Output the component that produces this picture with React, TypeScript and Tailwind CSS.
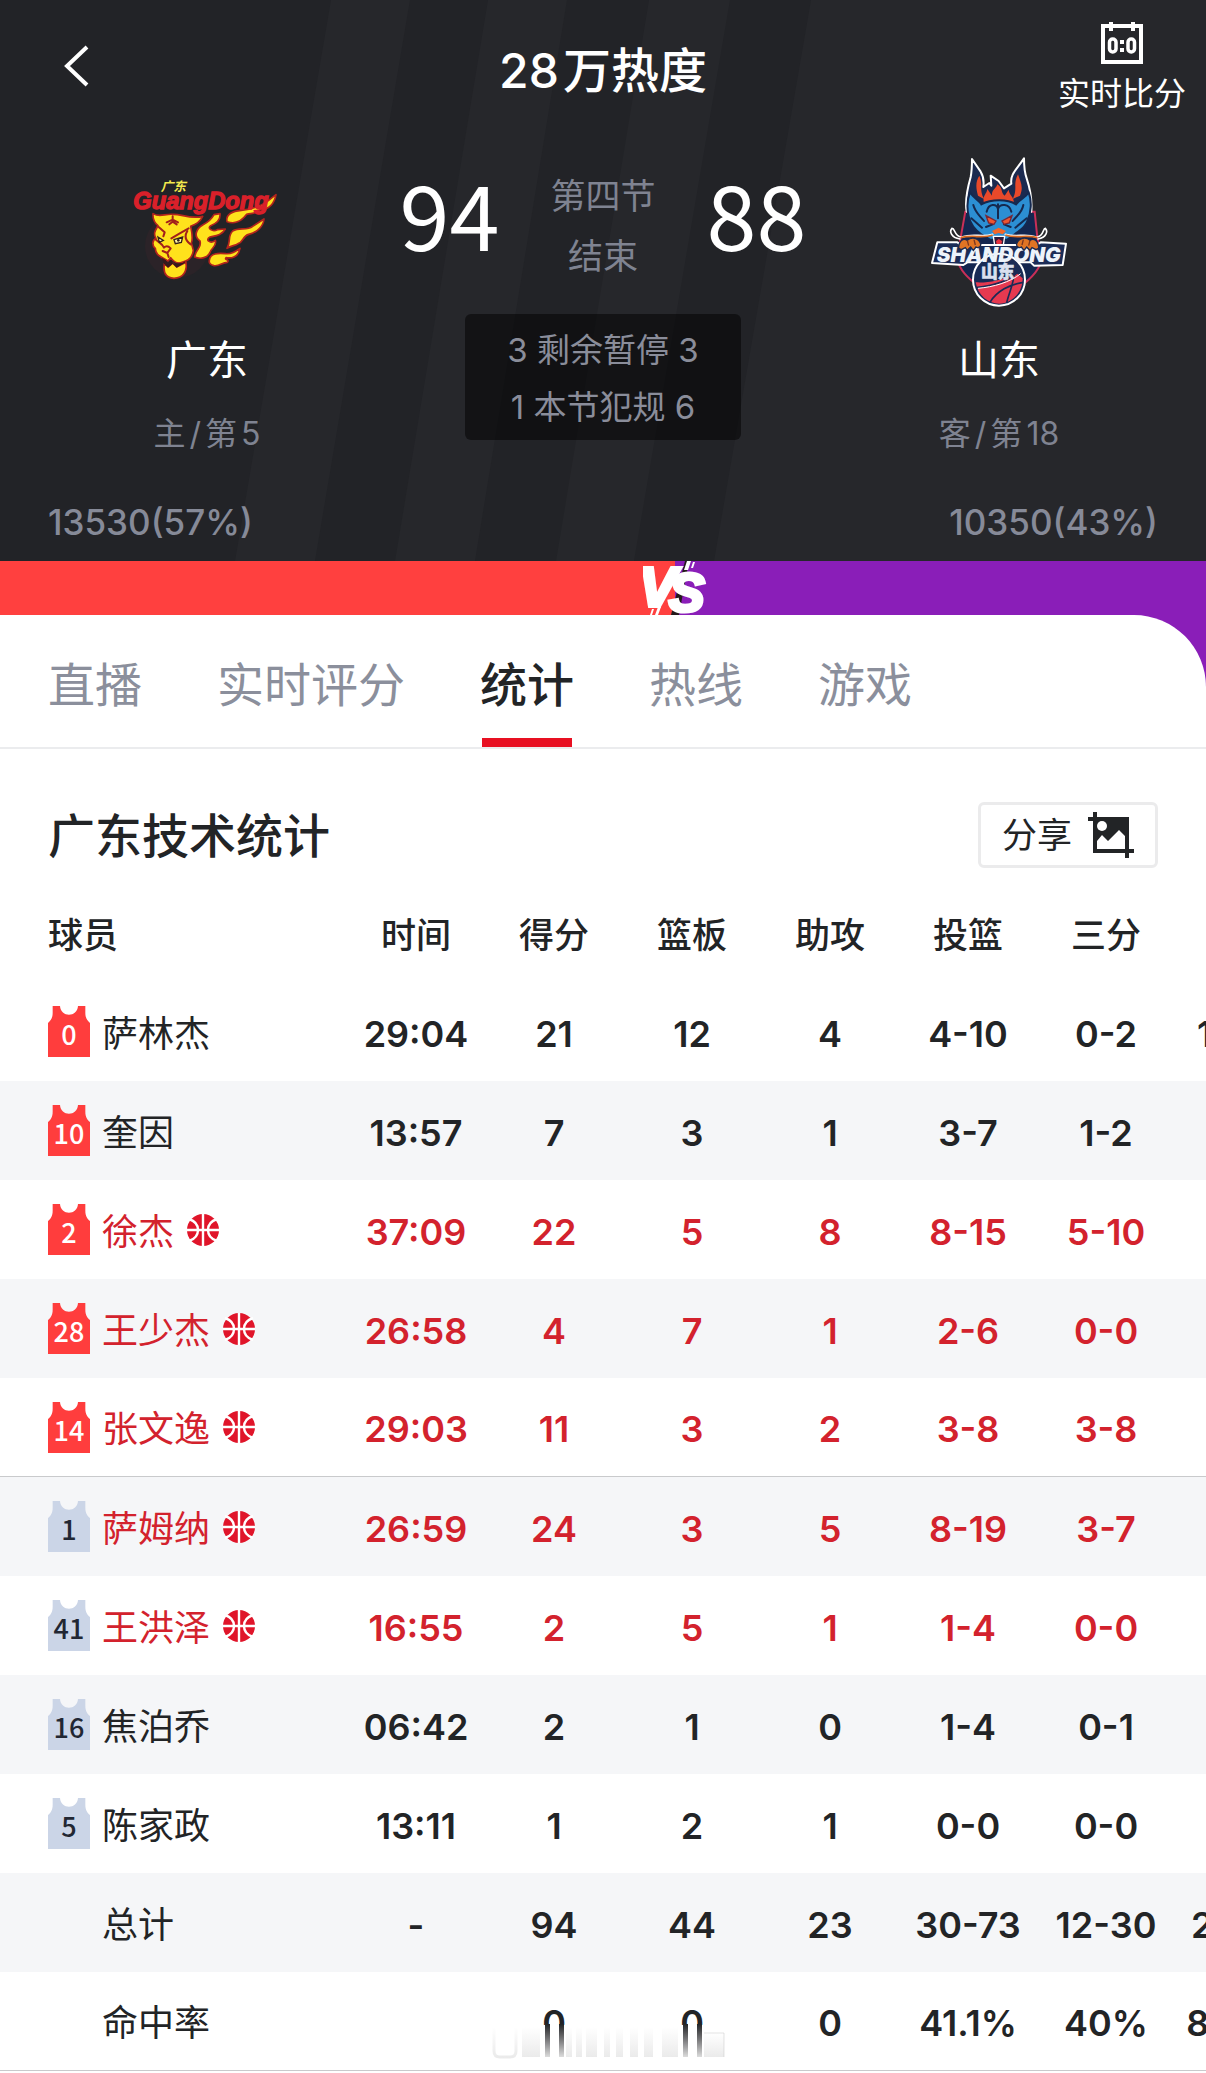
import React from "react";

type Player = {
  no: string;
  name: string;
  starter: boolean;
  onCourt: boolean;
  stats: string[];
};

const columns = ["时间", "得分", "篮板", "助攻", "投篮", "三分", "罚球"];

const players: Player[] = [
  { no: "0", name: "萨林杰", starter: true, onCourt: false, stats: ["29:04", "21", "12", "4", "4-10", "0-2", "13-14"] },
  { no: "10", name: "奎因", starter: true, onCourt: false, stats: ["13:57", "7", "3", "1", "3-7", "1-2", ""] },
  { no: "2", name: "徐杰", starter: true, onCourt: true, stats: ["37:09", "22", "5", "8", "8-15", "5-10", ""] },
  { no: "28", name: "王少杰", starter: true, onCourt: true, stats: ["26:58", "4", "7", "1", "2-6", "0-0", ""] },
  { no: "14", name: "张文逸", starter: true, onCourt: true, stats: ["29:03", "11", "3", "2", "3-8", "3-8", ""] },
  { no: "1", name: "萨姆纳", starter: false, onCourt: true, stats: ["26:59", "24", "3", "5", "8-19", "3-7", ""] },
  { no: "41", name: "王洪泽", starter: false, onCourt: true, stats: ["16:55", "2", "5", "1", "1-4", "0-0", ""] },
  { no: "16", name: "焦泊乔", starter: false, onCourt: false, stats: ["06:42", "2", "1", "0", "1-4", "0-1", ""] },
  { no: "5", name: "陈家政", starter: false, onCourt: false, stats: ["13:11", "1", "2", "1", "0-0", "0-0", ""] },
];

const summary = [
  { name: "总计", stats: ["-", "94", "44", "23", "30-73", "12-30", "22-26"] },
  { name: "命中率", stats: ["", "0", "0", "0", "41.1%", "40%", "84.6%"] },
];

function Stripes() {
  return (
    <svg className="absolute inset-0 h-full w-full" viewBox="0 0 1206 561" preserveAspectRatio="xMidYMin slice" aria-hidden="true">
      <g fill="#26272b">
        <path d="M331 0H410L315 561H235Z" />
        <path d="M488 0H567L475 561H395Z" />
        <path d="M649 0H730L634 561H556Z" />
        <path d="M811 0H1206V561H714Z" />
      </g>
    </svg>
  );
}

function ScoreIcon() {
  return (
    <svg width="42" height="42" viewBox="0 0 42 42" aria-hidden="true">
      <path d="M2 4H40V40H2Z" fill="none" stroke="#fff" strokeWidth="4" />
      <path d="M8 0H12V9H8ZM30 0H34V9H30Z" fill="#fff" />
      <g fill="none" stroke="#fff" strokeWidth="3.5">
        <rect x="8.5" y="17" width="6.5" height="13" rx="3.2" />
        <rect x="27" y="17" width="6.5" height="13" rx="3.2" />
      </g>
      <path d="M19 18H23V22H19ZM19 26H23V30H19Z" fill="#fff" />
    </svg>
  );
}

function GuangdongLogo() {
  return (
    <svg width="150" height="152" viewBox="70 -15 450 456" role="img" aria-label="GuangDong">
      <circle cx="205" cy="255" r="96" fill="#2b2328" />
      <g fill="#ffe21c" stroke="#b3241c" strokeWidth="5" strokeLinejoin="round">
        <path d="M355 182C350 160 372 150 398 148C425 145 455 135 472 124L502 101C498 125 482 147 455 146C440 160 428 156 414 160C398 182 376 190 355 182Z" />
        <path d="M355 262C368 240 356 225 372 210C392 198 414 210 432 196L466 174C464 196 446 214 420 220C402 224 404 244 388 248C378 254 368 254 355 262Z" />
        <path d="M302 298C304 276 330 276 350 278C368 280 380 272 394 262C390 282 376 294 352 290C346 298 364 294 356 304C340 304 334 316 316 314C306 312 300 306 302 298Z" />
        <path d="M258 288C262 262 280 262 274 240C254 226 262 204 282 192C298 184 308 176 316 161L334 158C336 176 322 188 306 194C294 202 312 214 326 206L350 204C340 222 322 224 304 228C288 236 304 250 320 238C326 256 306 262 304 274C298 290 276 296 258 288Z" />
        <path d="M133 158C150 170 170 158 192 160C216 158 246 176 282 166C274 184 260 190 246 196C250 214 254 232 248 246L254 268C252 292 236 300 220 304C210 308 196 304 186 290L178 300L164 292C150 284 140 278 140 262C130 254 130 238 142 232C132 216 142 206 148 194C136 184 132 172 133 158Z" />
        <path d="M167 308L178 318L192 306L204 318L232 304C236 330 224 352 196 352C168 350 164 332 167 308Z" />
      </g>
      <g fill="none" stroke="#a3201b" strokeWidth="6" strokeLinecap="round" strokeLinejoin="round">
        <path d="M174 184L192 176L208 184M192 166V182L182 190M192 182L204 190" />
        <path d="M150 198L168 214L164 226M240 202L212 218L188 232" />
        <path d="M142 236C156 248 162 250 166 260C172 254 178 254 186 262L176 276L162 270M176 276L180 288M236 210C226 226 232 240 246 250" />
      </g>
      <path d="M148 228L164 238L152 244ZM196 236L222 228L218 244L200 248Z" fill="#fff3a0" stroke="#35201d" strokeWidth="4" />
      <circle cx="209" cy="238" r="4" fill="#30201d" />
      <path d="M160 290L172 298L176 308L186 298L196 308L222 306L230 300L228 306L204 320L192 308L178 320L166 308Z" fill="#36191c" />
      <text x="74" y="144" fontFamily="Liberation Sans" fontWeight="700" fontStyle="italic" fontSize="71" fill="#d9202a" stroke="#d9202a" strokeWidth="4">
        GuangDong
      </text>
      <text x="156" y="90" fontFamily="Noto Sans CJK SC" fontWeight="700" fontStyle="italic" fontSize="38" fill="#f2e94e">
        广东
      </text>
    </svg>
  );
}

function ShandongLogo() {
  return (
    <svg width="150" height="152" viewBox="42 45 450 456" role="img" aria-label="SHANDONG">
      <path d="M166 212L152 290L140 350C150 392 176 412 210 440H326C366 412 392 384 396 350L382 290L374 212Z" fill="#14264f" stroke="#c92f58" strokeWidth="6" />
      <path d="M170 212C164 180 170 150 182 108C186 88 186 72 186 54L212 92C222 108 222 122 220 138L238 126L244 134L242 104L266 120L282 142L304 128C300 100 318 88 342 52C342 76 344 96 350 112C366 160 366 186 364 212Z" fill="#1b2a50" stroke="#fff" strokeWidth="6" strokeLinejoin="round" />
      <path d="M204 164C196 136 198 120 208 104C220 130 206 144 222 174ZM330 164C342 136 330 120 324 100C308 130 324 144 308 174ZM222 186C216 164 230 160 232 144L246 164C244 146 260 142 262 130C280 142 272 156 284 164L296 146C298 166 316 168 310 190L266 182Z" fill="#e8492a" />
      <path d="M180 154C190 172 206 176 214 190C244 174 292 174 318 190C330 174 346 172 356 154C366 180 364 214 352 240C344 262 328 268 314 280L292 296H240L214 280C196 268 182 252 176 226C170 200 172 174 180 154Z" fill="#2c8fd3" stroke="#15294f" strokeWidth="6" />
      <g fill="none" stroke="#15294f" strokeWidth="6" strokeLinecap="round">
        <path d="M230 212C236 186 260 188 264 204C270 186 298 188 304 212M264 190V232M190 192C196 216 210 224 222 240M340 192C336 216 320 224 308 240M184 232L216 260M350 232L316 260M228 258L248 250M302 258L282 250" />
      </g>
      <path d="M228 224L258 240L252 250L236 246ZM306 224L276 240L282 250L298 246Z" fill="#ee5630" stroke="#7a2634" strokeWidth="4" />
      <path d="M246 270L266 260L288 270L278 280L266 276L254 280Z" fill="#f2672a" />
      <path d="M250 286H284L280 312H254Z" fill="#301b38" stroke="#fff" strokeWidth="4" />
      <path d="M258 300L266 294L276 300L274 310H260Z" fill="#e8323f" />
      <path d="M248 280C216 290 190 276 154 288C132 286 136 262 126 262C118 270 122 290 150 294M286 280C320 290 346 276 380 288C402 286 398 262 406 262C414 270 410 290 384 294" fill="none" stroke="#fff" strokeWidth="5" strokeLinecap="round" />
      <path d="M248 282C216 294 190 280 152 290M286 282C320 294 346 280 382 290" fill="none" stroke="#d8691f" strokeWidth="5" />
      <path d="M82 304H142L154 312H380L392 304L468 308L458 372L372 374L362 364H172L160 372L66 366Z" fill="#1b2c57" stroke="#fff" strokeWidth="6" strokeLinejoin="round" />
      <circle cx="267" cy="416" r="78" fill="#192b55" stroke="#fff" strokeWidth="6" />
      <path d="M197 424C230 426 270 420 322 398L338 412C338 460 300 488 268 488C234 488 204 464 197 424Z" fill="#e63950" />
      <path d="M198 440C250 434 300 420 326 390M240 484C260 450 300 430 340 424M290 486C296 456 316 420 312 388" fill="none" stroke="#1b2a55" strokeWidth="5" />
      <path d="M204 442C250 438 300 424 332 398" fill="none" stroke="#fff" strokeWidth="3" />
      <text x="266" y="362" textAnchor="middle" fontFamily="Inter" fontWeight="900" fontStyle="italic" fontSize="62" fill="#edf3fa">
        SHANDONG
      </text>
      <text x="263" y="412" textAnchor="middle" fontFamily="Noto Sans CJK SC" fontWeight="900" fontSize="50" fill="#dbe0ef" stroke="#dbe0ef" strokeWidth="2">
        山东
      </text>
      <path d="M146 322C146 300 160 290 172 298C184 286 206 290 212 308C214 318 204 322 198 318L190 328L182 318L172 328L166 320L154 326ZM386 322C386 300 372 290 360 298C348 286 326 290 320 308C318 318 328 322 334 318L342 328L350 318L360 328L366 320L378 326Z" fill="#e07424" stroke="#1b2a50" strokeWidth="4" />
      <path d="M172 298L176 314M192 296L196 312M360 298L356 314M340 296L336 312" stroke="#7a3620" strokeWidth="4" />
    </svg>
  );
}

function Versus() {
  return (
    <svg className="absolute top-0 left-[56%] -ml-8" width="66" height="54" viewBox="0 0 66 54" role="img" aria-label="VS">
      <path d="M42 0H46L36 54H28Z" fill="#241a1c" />
      <g fontFamily="Liberation Sans" fontWeight="700" fontStyle="italic" fill="#fff" stroke="#fff" strokeWidth="4" fontSize="56">
        <text x="-4" y="45">V</text>
        <text x="26" y="50" fontSize="53">S</text>
      </g>
      <path d="M44 0H48L45 9H41ZM50 1H52L50 7H48ZM15 46H18L15 54H12ZM9 48H11L9 54H7Z" fill="#fff" />
    </svg>
  );
}

function ShareIcon() {
  return (
    <svg width="46" height="46" viewBox="0 0 46 46" aria-hidden="true">
      <path d="M0 5H5V0H9V5H41V37H46V41H41V46H37V41H5V9H0Z" fill="#222426" />
      <circle cx="14" cy="14" r="5" fill="#fff" />
      <path d="M9 37V29L14 23L20 29L31 18L37 24V37Z" fill="#fff" />
    </svg>
  );
}

function Jersey({ no, starter }: { no: string; starter: boolean }) {
  return (
    <svg className="shrink-0" width="42" height="51" viewBox="0 0 126 153" role="img" aria-label={no}>
      <path d="M14 0H36C38 35 88 35 90 0H112V20C112 36 118 44 126 51V153H0V51C8 44 14 36 14 20Z" fill={starter ? "#ff3d3d" : "#cbd5e7"} />
      <text x="63" y="116" textAnchor="middle" fontFamily="Noto Sans CJK SC" fontWeight="500" fontSize="81" fill={starter ? "#fff" : "#222733"}>
        {no}
      </text>
    </svg>
  );
}

function Basketball() {
  return (
    <svg className="ml-px shrink-0" width="32" height="32" viewBox="0 0 32 32" role="img" aria-label="在场">
      <circle cx="16" cy="16" r="16" fill="#e0152a" />
      <g fill="none" stroke="#fff" strokeWidth="2.4">
        <path d="M16 0V32M0 16H32" />
        <path d="M2 5C8 7 11 11 11 16C11 21 8 25 2 27M30 5C24 7 21 11 21 16C21 21 24 25 30 27" />
      </g>
    </svg>
  );
}

/* Faint smear left by a removed watermark over the last row. */
function WatermarkResidue() {
  return (
    <svg className="absolute bottom-3 left-[470px]" width="270" height="40" viewBox="0 0 270 40" aria-hidden="true">
      <defs>
        <linearGradient id="haze" x1="0" y1="0" x2="0" y2="1">
          <stop offset="0" stopColor="#999" stopOpacity="0" />
          <stop offset="1" stopColor="#999" stopOpacity="0.2" />
        </linearGradient>
        <linearGradient id="stem" x1="0" y1="0" x2="0" y2="1">
          <stop offset="0" stopColor="#222426" />
          <stop offset="0.4" stopColor="#6a6a6c" />
          <stop offset="1" stopColor="#dcdcdc" />
        </linearGradient>
      </defs>
      <g fill="url(#haze)">
        <rect x="52" y="8" width="18" height="30" />
        <rect x="96" y="8" width="6" height="30" />
        <rect x="106" y="8" width="6" height="30" />
        <rect x="116" y="8" width="11" height="30" />
        <rect x="134" y="8" width="6" height="30" />
        <rect x="146" y="8" width="7" height="30" />
        <rect x="160" y="8" width="8" height="30" />
        <rect x="174" y="8" width="9" height="30" />
        <rect x="192" y="8" width="16" height="30" />
        <rect x="234" y="14" width="20" height="24" />
      </g>
      <path d="M24 8V32Q24 38 30 38H40Q46 38 46 32V8" fill="none" stroke="url(#haze)" strokeWidth="3" />
      <path d="M234 14H254V38" fill="none" stroke="#bbb" strokeOpacity="0.4" />
      <g fill="#fff">
        <rect x="72" y="6" width="24" height="32" />
        <rect x="210" y="6" width="24" height="32" />
      </g>
      <g fill="url(#stem)">
        <rect x="75" y="5" width="5" height="33" />
        <rect x="89" y="5" width="5" height="33" />
        <rect x="213" y="5" width="5" height="33" />
        <rect x="227" y="5" width="5" height="33" />
      </g>
    </svg>
  );
}

function Team({ logo, name, side, rank }: { logo: React.ReactNode; name: string; side: string; rank: string }) {
  return (
    <div className="flex w-[318px] flex-col items-center pt-6">
      {logo}
      <div className="mt-[22px] text-[41px] leading-[60px] text-white">{name}</div>
      <div className="mt-5 text-[32px] leading-[48px] text-[#7f8391]">
        {side}
        <span className="mx-1">/</span>第<span className="ml-1">{rank}</span>
      </div>
    </div>
  );
}

const tabs = ["直播", "实时评分", "统计", "热线", "游戏"];

export default function App() {
  return (
    <div className="min-h-screen overflow-hidden bg-white font-['Inter','Noto_Sans_CJK_SC',sans-serif] text-[#222426]">
      <header className="relative bg-[#222327]">
        <Stripes />
        <div className="relative">
          <div className="flex h-[132px] items-center justify-between pr-5 pl-[60px]">
            <div className="flex flex-1">
              <button aria-label="返回">
                <svg width="32" height="48" viewBox="0 0 32 48" fill="none" stroke="#fff" strokeWidth="4" aria-hidden="true">
                  <path d="M27 5L7 24L27 43" />
                </svg>
              </button>
            </div>
            <h1 className="pt-2.5 pr-10 text-[48px] font-medium text-white">
              28<span className="ml-1">万热度</span>
            </h1>
            <div className="flex flex-1 justify-end pt-2">
              <button className="flex flex-col items-center gap-1.5 text-[32px] leading-[48px] text-white">
                <ScoreIcon />
                实时比分
              </button>
            </div>
          </div>

          <div className="flex px-12">
            <Team logo={<GuangdongLogo />} name="广东" side="主" rank="5" />
            <div className="flex flex-1 flex-col items-center pt-8">
              <div className="flex h-[120px] items-center gap-[51px]">
                <span className="pb-6 font-['Noto_Sans_CJK_SC',sans-serif] text-[90px] leading-[96px] text-white">94</span>
                <div className="pt-1 text-center text-[35px] leading-[60px] whitespace-nowrap text-[#7f8391]">
                  第四节
                  <br />
                  结束
                </div>
                <span className="pb-6 font-['Noto_Sans_CJK_SC',sans-serif] text-[90px] leading-[96px] text-white">88</span>
              </div>
              <div className="mt-[30px] w-[276px] rounded-md bg-black/50 pt-2 pb-1 text-center text-[33px] leading-[57px] text-[#8a8d9a]">
                <div>3 剩余暂停 3</div>
                <div>1 本节犯规 6</div>
              </div>
            </div>
            <Team logo={<ShandongLogo />} name="山东" side="客" rank="18" />
          </div>

          <div className="flex justify-between px-12 pt-10 pb-[15px] text-[35px] leading-[48px] font-medium text-[#868a98]">
            <span>13530(57%)</span>
            <span>10350(43%)</span>
          </div>
        </div>
      </header>

      <div className="relative flex h-[54px]">
        <div className="w-[56%] bg-[#ff403f]" />
        <div className="flex-1 bg-[#8a1eb8]" />
        <Versus />
      </div>

      <div className="bg-[#8a1eb8]">
        <nav className="flex gap-[75px] rounded-tr-[72px] border-b-2 border-[#ebecee] bg-white px-12">
          {tabs.map((t) => (
            <button
              key={t}
              className={
                t === "统计"
                  ? "relative h-[132px] pt-2 text-[47px] font-medium text-[#222426] after:absolute after:inset-x-[2px] after:bottom-0 after:h-[9px] after:bg-[#e81022]"
                  : "h-[132px] pt-2 text-[47px] text-[#8b8f9c]"
              }
            >
              {t}
            </button>
          ))}
        </nav>
      </div>

      <main>
        <div className="flex items-center justify-between px-12 pt-[53px]">
          <h2 className="pt-0.5 text-[47px] leading-[62px] font-medium">广东技术统计</h2>
          <button className="flex h-[66px] items-center gap-4 rounded-md border-[3px] border-[#ebebec] px-[21px] text-[35px]">
            分享
            <ShareIcon />
          </button>
        </div>

        <div className="relative mt-5 overflow-x-auto overflow-y-hidden [scrollbar-width:none]">
          <table className="w-full min-w-[1313px] table-fixed border-separate border-spacing-0 text-center">
            <thead>
              <tr className="text-[35px]">
                <th className="h-[94px] w-[347px] pl-12 text-left font-medium">球员</th>
                {columns.map((c) => (
                  <th key={c} className="font-medium">
                    {c}
                  </th>
                ))}
              </tr>
            </thead>
            <tbody>
              {players.map((p, i) => (
                <tr
                  key={p.no}
                  className={`${i % 2 ? "bg-[#f5f6f8]" : "bg-white"} ${p.onCourt ? "text-[#d3222d]" : "text-[#222426]"} ${i === 4 ? "[&>td]:border-b [&>td]:border-[#c9cacc]" : ""}`}
                >
                  <td className="h-[99px] py-0 pl-12">
                    <div className="flex items-center gap-3 text-[36px] leading-[50px]">
                      <Jersey no={p.no} starter={p.starter} />
                      <span className="pt-1">{p.name}</span>
                      {p.onCourt && <Basketball />}
                    </div>
                  </td>
                  {p.stats.map((s, j) => (
                    <td key={j} className="px-0 pt-1 pb-0 text-[36px] font-semibold whitespace-nowrap">
                      {s}
                    </td>
                  ))}
                </tr>
              ))}
              {summary.map((r, i) => (
                <tr key={r.name} className={i ? "bg-white [&>td]:border-b [&>td]:border-[#c9cacc]" : "bg-[#f5f6f8]"}>
                  <td className="h-[99px] pt-1 pb-0 pl-[102px] text-left text-[36px]">{r.name}</td>
                  {r.stats.map((s, j) => (
                    <td key={j} className="px-0 pt-1 pb-0 text-[36px] font-semibold whitespace-nowrap">
                      {s}
                    </td>
                  ))}
                </tr>
              ))}
            </tbody>
          </table>
          <WatermarkResidue />
        </div>
      </main>
    </div>
  );
}
